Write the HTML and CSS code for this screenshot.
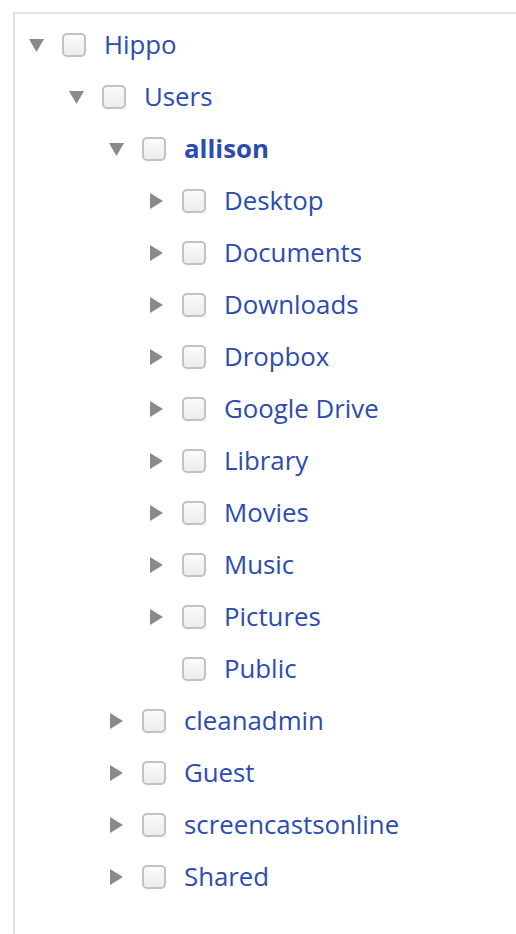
FILE: index.html
```html
<!DOCTYPE html>
<html lang="en">
<head>
  <meta charset="UTF-8">
  <title>Folder tree</title>
  <link rel="stylesheet" href="styles.css">
</head>
<body>
  <div class="tree-panel">
    <ul class="tree">
      <li>
        <div class="row">
          <span class="toggle"><svg width="18" height="18" viewBox="0 0 18 18"><polygon points="1,3 16,3 8.5,16"/></svg></span>
          <span class="check"></span>
          <span class="label">Hippo</span>
        </div>
        <ul>
          <li>
            <div class="row">
              <span class="toggle"><svg width="18" height="18" viewBox="0 0 18 18"><polygon points="1,3 16,3 8.5,16"/></svg></span>
              <span class="check"></span>
              <span class="label">Users</span>
            </div>
            <ul>
              <li>
                <div class="row">
                  <span class="toggle"><svg width="18" height="18" viewBox="0 0 18 18"><polygon points="1,3 16,3 8.5,16"/></svg></span>
                  <span class="check"></span>
                  <span class="label bold">allison</span>
                </div>
                <ul>
                  <li><div class="row"><span class="toggle"><svg width="18" height="18" viewBox="0 0 18 18"><polygon points="2,1 15,9 2,17"/></svg></span><span class="check"></span><span class="label">Desktop</span></div></li>
                  <li><div class="row"><span class="toggle"><svg width="18" height="18" viewBox="0 0 18 18"><polygon points="2,1 15,9 2,17"/></svg></span><span class="check"></span><span class="label">Documents</span></div></li>
                  <li><div class="row"><span class="toggle"><svg width="18" height="18" viewBox="0 0 18 18"><polygon points="2,1 15,9 2,17"/></svg></span><span class="check"></span><span class="label">Downloads</span></div></li>
                  <li><div class="row"><span class="toggle"><svg width="18" height="18" viewBox="0 0 18 18"><polygon points="2,1 15,9 2,17"/></svg></span><span class="check"></span><span class="label">Dropbox</span></div></li>
                  <li><div class="row"><span class="toggle"><svg width="18" height="18" viewBox="0 0 18 18"><polygon points="2,1 15,9 2,17"/></svg></span><span class="check"></span><span class="label">Google Drive</span></div></li>
                  <li><div class="row"><span class="toggle"><svg width="18" height="18" viewBox="0 0 18 18"><polygon points="2,1 15,9 2,17"/></svg></span><span class="check"></span><span class="label">Library</span></div></li>
                  <li><div class="row"><span class="toggle"><svg width="18" height="18" viewBox="0 0 18 18"><polygon points="2,1 15,9 2,17"/></svg></span><span class="check"></span><span class="label">Movies</span></div></li>
                  <li><div class="row"><span class="toggle"><svg width="18" height="18" viewBox="0 0 18 18"><polygon points="2,1 15,9 2,17"/></svg></span><span class="check"></span><span class="label">Music</span></div></li>
                  <li><div class="row"><span class="toggle"><svg width="18" height="18" viewBox="0 0 18 18"><polygon points="2,1 15,9 2,17"/></svg></span><span class="check"></span><span class="label">Pictures</span></div></li>
                  <li><div class="row"><span class="toggle"></span><span class="check"></span><span class="label">Public</span></div></li>
                </ul>
              </li>
              <li><div class="row"><span class="toggle"><svg width="18" height="18" viewBox="0 0 18 18"><polygon points="2,1 15,9 2,17"/></svg></span><span class="check"></span><span class="label">cleanadmin</span></div></li>
              <li><div class="row"><span class="toggle"><svg width="18" height="18" viewBox="0 0 18 18"><polygon points="2,1 15,9 2,17"/></svg></span><span class="check"></span><span class="label">Guest</span></div></li>
              <li><div class="row"><span class="toggle"><svg width="18" height="18" viewBox="0 0 18 18"><polygon points="2,1 15,9 2,17"/></svg></span><span class="check"></span><span class="label">screencastsonline</span></div></li>
              <li><div class="row"><span class="toggle"><svg width="18" height="18" viewBox="0 0 18 18"><polygon points="2,1 15,9 2,17"/></svg></span><span class="check"></span><span class="label">Shared</span></div></li>
            </ul>
          </li>
        </ul>
      </li>
    </ul>
  </div>
</body>
</html>
```
FILE: styles.css
```css
html, body {
  margin: 0;
  padding: 0;
  background: #fff;
}
body {
  font-family: "Open Sans", "Liberation Sans", sans-serif;
}
.tree-panel {
  margin: 12px 0 0 13px;
  border-left: 2px solid #e3e3e3;
  border-top: 2px solid #e3e3e3;
  min-height: 920px;
  padding: 5px 0 0 13px;
}
.tree, .tree ul {
  list-style: none;
  margin: 0;
  padding: 0;
}
.tree ul {
  padding-left: 40px;
}
.row {
  display: flex;
  align-items: center;
  height: 52px;
}
.toggle {
  width: 20px;
  height: 18px;
  display: flex;
  align-items: center;
}
.toggle svg {
  fill: #8a8a8a;
}
.check {
  width: 20px;
  height: 20px;
  margin-left: 14px;
  border: 2px solid #c2c2c2;
  border-radius: 5px;
  background: linear-gradient(#fbfbfb, #ececec);
  box-shadow: 0 0 1px #9993;
}
.label {
  margin-left: 18px;
  font-size: 25.8px;
  color: #2c4bb1;
  line-height: 1;
  white-space: nowrap;
}
.label.bold {
  font-weight: 700;
}
```
